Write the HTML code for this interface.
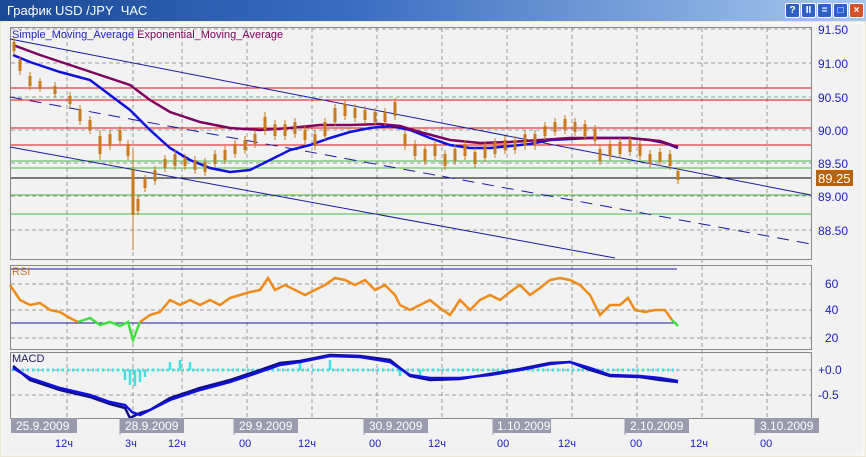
<!DOCTYPE html><html><head><meta charset="utf-8"><style>
body{margin:0;width:866px;height:457px;overflow:hidden;background:#ece9d8;font-family:"Liberation Sans","Noto Sans CJK SC",sans-serif}
.tb{position:absolute;left:0;top:0;width:866px;height:21px;background:linear-gradient(90deg,#1a4a96,#3a6cc0 40%,#a8c8ee);}
.tb span{position:absolute;left:7px;top:3px;color:#fff;font-size:13px}
.b{position:absolute;top:3px;width:13px;height:13px;border:1px solid #fff;border-radius:2px;background:#2f5fc8;color:#fff;font-size:10px;line-height:13px;text-align:center;font-weight:bold}
</style></head><body>
<div class="tb"><span>График USD /JPY&nbsp; ЧАС</span>
<div class="b" style="left:785px">?</div><div class="b" style="left:801px">II</div><div class="b" style="left:817px">=</div><div class="b" style="left:833px">□</div><div class="b" style="left:849px;background:#d8502a">×</div></div>
<svg style="position:absolute;left:0;top:21px" width="866" height="436" viewBox="0 21 866 436" font-family="Liberation Sans, sans-serif">
<rect x="0" y="21" width="866" height="436" fill="#ece9d8"/>
<rect x="2" y="23" width="862" height="432" fill="#f2f2f2" stroke="#fff"/>
<g fill="#f2f2f2" stroke="#888"><rect x="10.5" y="27.5" width="801" height="232"/><rect x="10.5" y="265.5" width="801" height="84"/><rect x="10.5" y="352.5" width="801" height="66"/></g>
<g stroke="#999" stroke-dasharray="4,3" fill="none">
<path d="M67 28V418M133 28V418M182 28V418M247 28V418M312 28V418M377 28V418M442 28V418M507 28V418M572 28V418M637 28V418M702 28V418M767 28V418"/>
<path d="M11 29H811M11 63H811M11 97H811M11 130H811M11 163H811M11 196H811M11 230H811M11 284H811M11 310H811M11 338H811M11 370H811M11 395H811"/>
</g>
<g stroke="#dd1111"><path d="M11 88H811M11 100H811M11 128H811M11 145H811"/></g>
<g stroke="#44bb44"><path d="M11 161H811M11 168H811M11 195H811M11 214H811"/></g>
<path d="M11 178H811" stroke="#000"/>
<g stroke="#1a1aa0" fill="none"><path d="M10 39L811 195M10 147L615 258"/><path d="M10 97L811 244" stroke-dasharray="12,8"/></g>
<polyline fill="none" stroke="#1010e0" stroke-width="2.5" points="13,55 30,62 60,72 90,80 110,95 130,110 150,130 170,148 190,160 210,168 230,172 250,170 270,160 290,150 310,145 330,138 350,132 370,128 390,126 410,130 430,138 450,145 470,148 490,148 510,146 530,144 550,140 570,139 590,138 610,138 630,138 650,140 665,143 678,148"/>
<polyline fill="none" stroke="#800060" stroke-width="2.5" points="13,45 40,55 70,65 100,75 130,85 150,100 170,112 200,122 230,128 260,130 290,128 320,125 350,125 380,124 400,126 420,132 450,140 480,143 510,142 540,140 570,138 600,138 630,138 660,141 678,147"/>
<g fill="#c87a1e" stroke="#c87a1e">
<path d="M14 38V55M20 56V75M30 72V90M40 78V92M55 82V98M70 92V108M80 105V125M90 116V134M100 130V160M110 130V150M120 126V145M128 140V160M133 150V250M138 195V215M145 175V192M155 166V185M165 155V172M175 150V170M185 154V170M195 156V174M205 158V176M215 150V168M225 146V164M235 140V158M245 136V154M255 130V148M265 112V135M275 120V140M285 120V140M295 118V138M305 126V144M315 130V150M325 118V140M335 104V126M345 100V120M355 104V122M365 106V124M375 108V126M385 108V126M395 98V120M405 130V150M415 140V160M425 145V165M435 140V160M445 150V170M455 145V165M465 140V160M475 148V168M485 142V162M495 138V158M505 136V154M515 136V154M525 130V150M535 130V150M545 122V140M555 118V136M565 115V134M575 118V136M585 120V140M595 125V145M600 145V165M610 140V160M620 138V158M630 136V156M640 140V160M650 150V168M660 148V166M670 150V170M678 168V184"/>
<path stroke-width="3" d="M14 42V51M20 60V71M30 76V86M40 81V89M55 86V94M70 96V104M80 109V121M90 120V130M100 136V154M110 134V146M120 130V141M128 144V156M133 170V215M138 199V211M145 179V188M155 170V181M165 159V168M175 154V166M185 158V166M195 160V170M205 162V172M215 154V164M225 150V160M235 144V154M245 140V150M255 134V144M265 117V130M275 124V136M285 124V136M295 122V134M305 130V140M315 134V146M325 122V136M335 108V122M345 104V116M355 108V118M365 110V120M375 112V122M385 112V122M395 102V116M405 134V146M415 144V156M425 149V161M435 144V156M445 154V166M455 149V161M465 144V156M475 152V164M485 146V158M495 142V154M505 140V150M515 140V150M525 134V146M535 134V146M545 126V136M555 122V132M565 119V130M575 122V132M585 124V136M595 129V141M600 149V161M610 144V156M620 142V154M630 140V152M640 144V156M650 154V164M660 152V162M670 154V166M678 171V180"/>
</g>
<rect x="816" y="170" width="37" height="16" fill="#b8620e"/><text x="818" y="183" fill="#fff" font-size="13">89.25</text>
<g fill="#2020c0" font-size="12"><text x="818" y="34">91.50</text><text x="818" y="68">91.00</text><text x="818" y="102">90.50</text><text x="818" y="135">90.00</text><text x="818" y="168">89.50</text><text x="818" y="201">89.00</text><text x="818" y="235">88.50</text>
<text x="825" y="288">60</text><text x="825" y="314">40</text><text x="825" y="342">20</text><text x="818" y="374">+0.0</text><text x="818" y="399">-0.5</text></g>
<text x="12" y="38" font-size="11" fill="#2020c0">Simple_Moving_Average <tspan fill="#800060">Exponential_Moving_Average</tspan></text>
<path d="M11 269H677M11 323H677" stroke="#1a1aa0"/>
<text x="12" y="275" font-size="11" fill="#c87a1e">RSI</text>
<polyline fill="none" stroke="#f08a18" stroke-width="2.5" points="10,285 20,300 30,305 40,303 50,310 60,312 70,318 78,322"/>
<polyline fill="none" stroke="#40e040" stroke-width="2.5" points="78,322 90,318 100,325 110,322 120,326 128,322 133,340 140,322"/>
<polyline fill="none" stroke="#f08a18" stroke-width="2.5" points="140,322 150,315 160,312 170,300 180,305 190,300 200,305 210,300 220,305 230,298 240,295 250,292 260,290 268,278 275,290 285,285 295,290 305,295 315,290 325,285 335,278 345,280 355,285 365,280 375,290 385,285 395,295 400,305 410,310 420,305 430,300 440,308 450,315 460,300 470,310 480,300 490,295 500,300 510,292 520,285 530,295 540,288 550,280 560,278 570,280 580,285 590,295 600,315 610,305 620,305 628,298 635,310 645,312 655,310 665,310 672,320"/>
<polyline fill="none" stroke="#40e040" stroke-width="2.5" points="672,320 678,326"/>
<text x="12" y="362" font-size="11" fill="#202060">MACD</text>
<path d="M12 370H678" stroke="#40e0e0" stroke-width="3" stroke-dasharray="2,3"/>
<path d="M125 370V380M130 370V385M135 370V386M140 370V382M145 370V377M170 362V370M180 360V370M190 362V370M300 362V370M330 360V370M400 370V376M420 370V375" stroke="#40e0e0" stroke-width="2.5"/>
<polyline fill="none" stroke="#101080" stroke-width="2.5" points="13,366 30,380 60,390 90,397 110,404 125,408 130,418 140,413 150,410 170,398 200,388 230,380 260,370 280,363 300,361 330,355 360,356 390,360 410,376 430,380 460,379 490,374 520,369 550,363 570,362 590,370 610,376 640,377 660,380 678,382"/>
<polyline fill="none" stroke="#1010e0" stroke-width="2.5" points="13,368 30,378 60,388 90,395 110,402 125,405 132,412 140,415 150,410 170,400 200,390 230,382 260,372 280,365 300,362 330,356 360,357 390,362 410,375 430,378 460,378 490,375 520,370 550,364 570,362 590,368 610,375 640,376 660,378 678,381"/>
<g fill="#9a9aae"><rect x="11" y="418" width="66" height="15"/><rect x="120" y="418" width="64" height="15"/><rect x="234" y="418" width="64" height="15"/><rect x="364" y="418" width="64" height="15"/><rect x="493" y="418" width="58" height="15"/><rect x="625" y="418" width="64" height="15"/><rect x="755" y="418" width="64" height="15"/></g>
<g fill="#fff" font-size="12"><text x="16" y="430">25.9.2009</text><text x="125" y="430">28.9.2009</text><text x="239" y="430">29.9.2009</text><text x="369" y="430">30.9.2009</text><text x="497" y="430">1.10.2009</text><text x="630" y="430">2.10.2009</text><text x="760" y="430">3.10.2009</text></g>
<path d="M120 418V435M234 418V435M364 418V435M493 418V435M625 418V435M755 418V435" stroke="#9a9aae"/>
<g fill="#2020c0" font-size="11"><text x="55" y="447">12ч</text><text x="125" y="447">3ч</text><text x="168" y="447">12ч</text><text x="239" y="447">00</text><text x="298" y="447">12ч</text><text x="369" y="447">00</text><text x="428" y="447">12ч</text><text x="497" y="447">00</text><text x="558" y="447">12ч</text><text x="630" y="447">00</text><text x="690" y="447">12ч</text><text x="760" y="447">00</text></g>
</svg></body></html>
